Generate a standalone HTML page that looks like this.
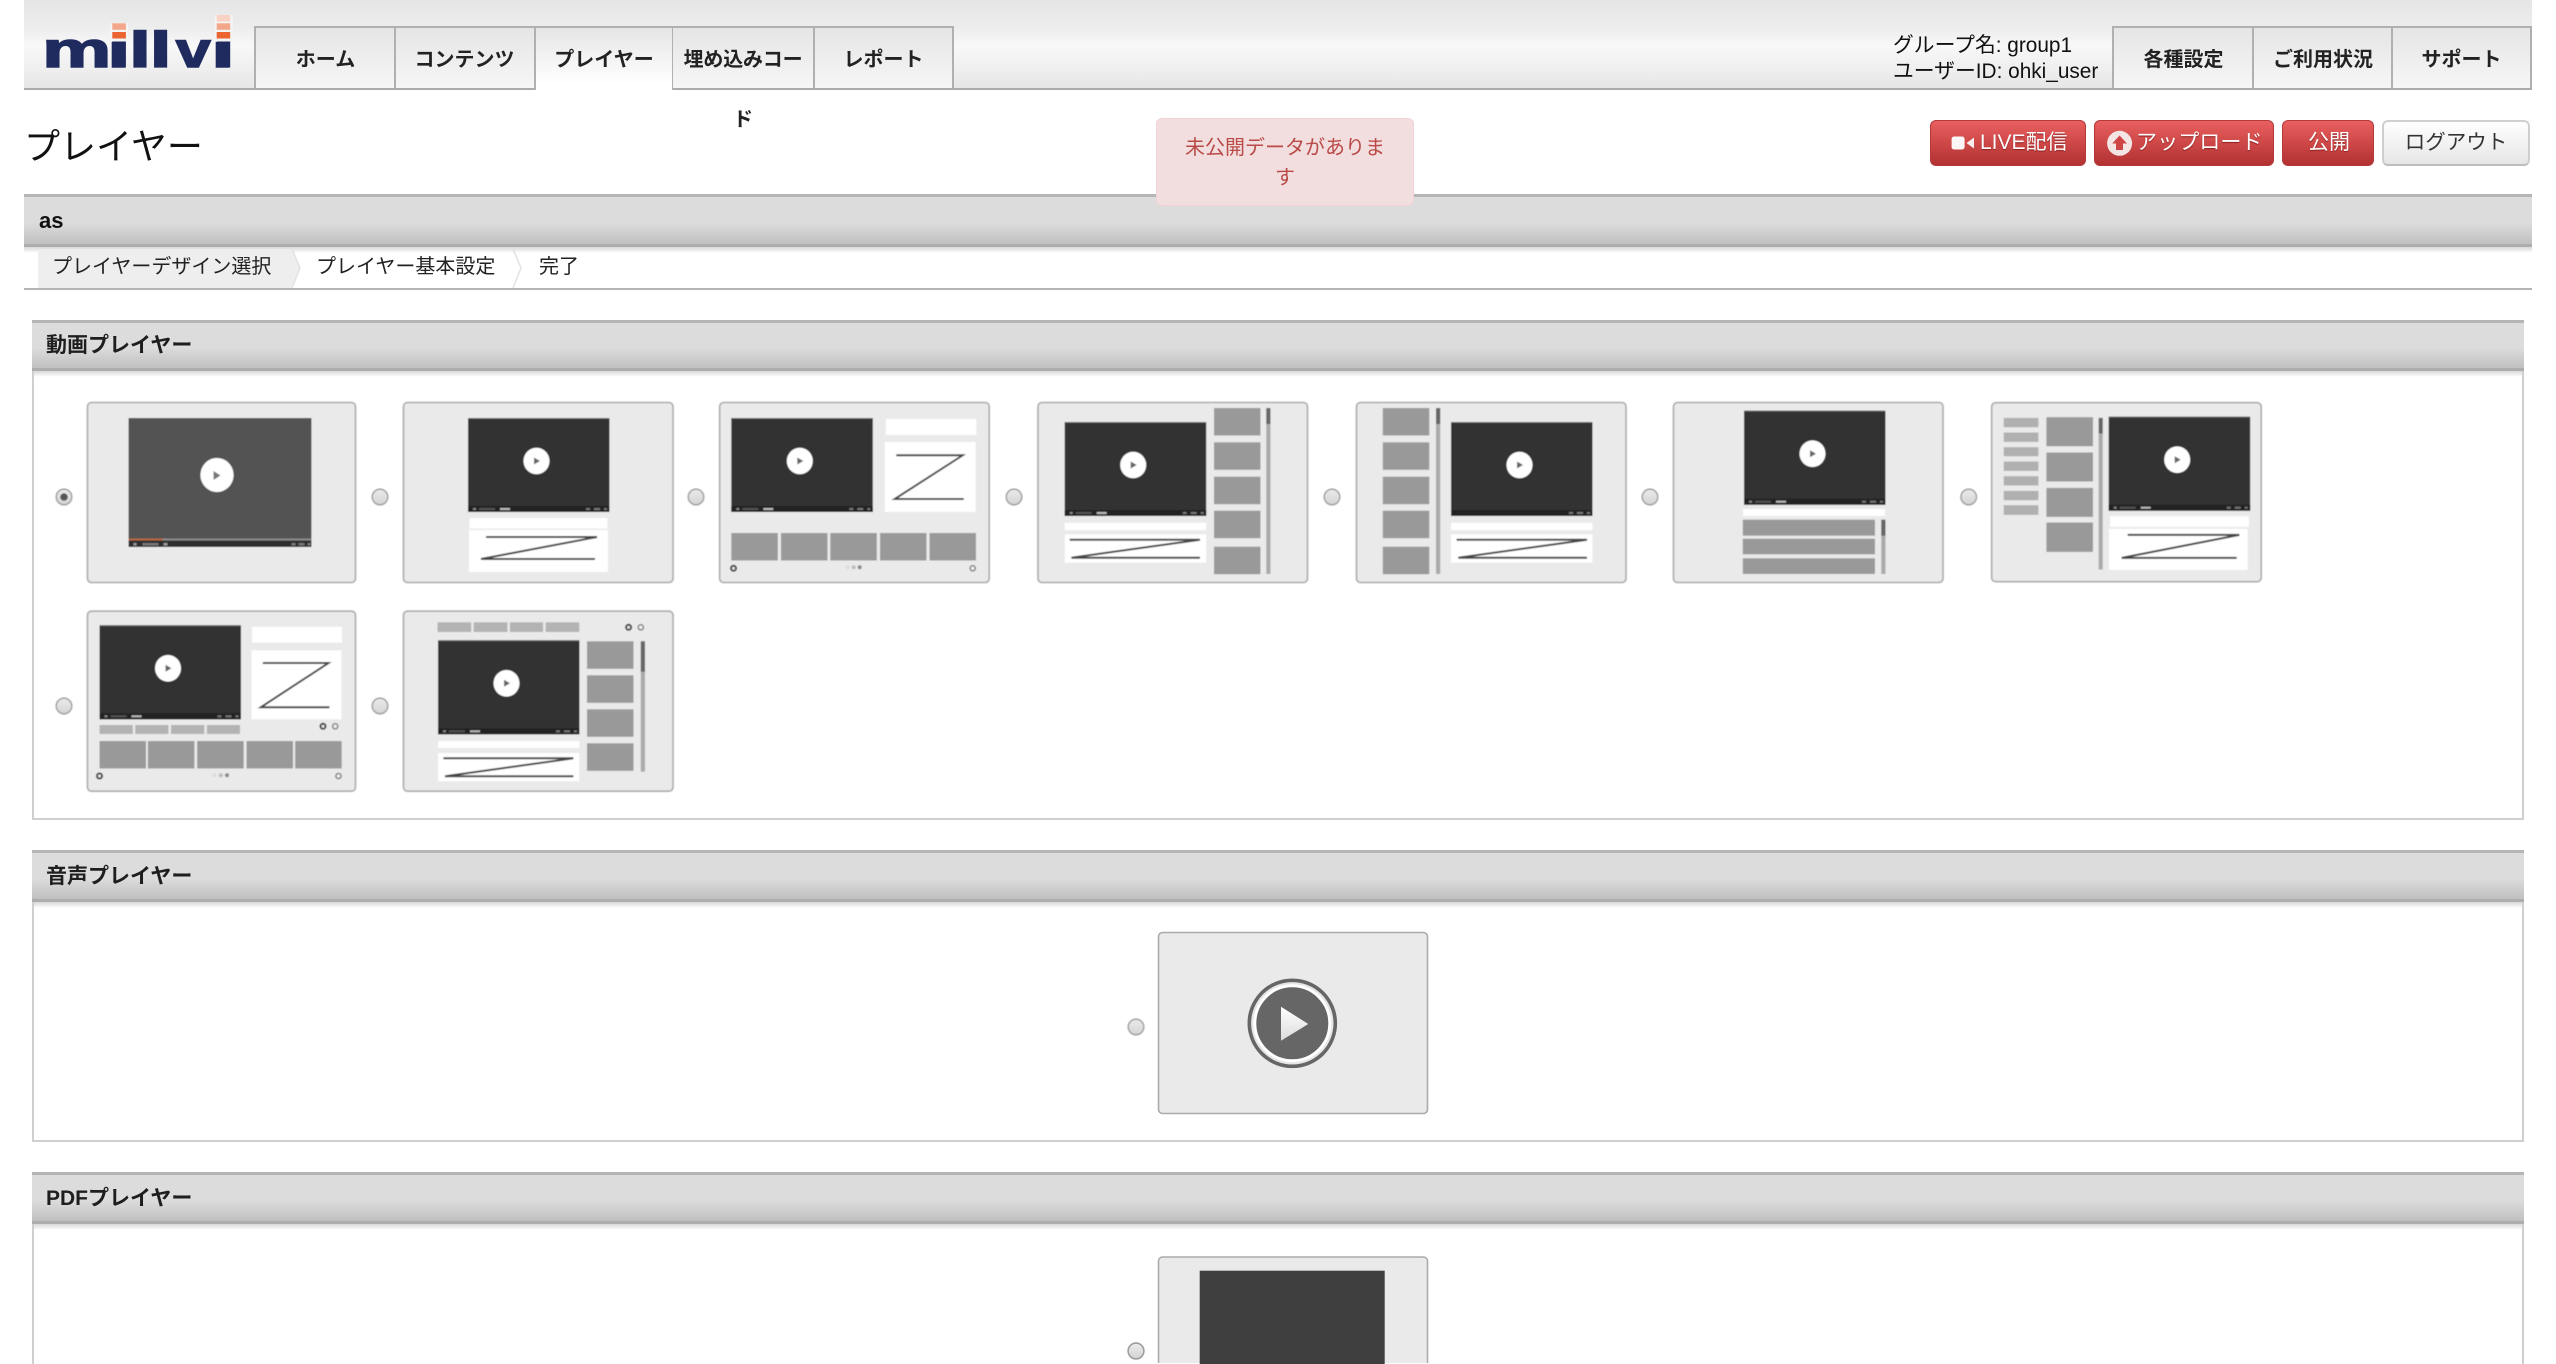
<!DOCTYPE html>
<html lang="ja"><head><meta charset="utf-8"><title>プレイヤー</title>
<style>
html,body{margin:0;padding:0;background:#fff;width:2556px;height:1364px;overflow:hidden}
body{position:relative;font-family:"Liberation Sans","Noto Sans CJK JP",sans-serif;color:#222}
.a{position:absolute;white-space:nowrap}
.hdr{left:24px;top:0;width:2508px;height:88px;background:linear-gradient(#e6e6e6 0,#ececec 30%,#f8f8f8 52%,#efefef 78%,#e6e6e6 100%);border-bottom:2px solid #ababab}
.tab{top:26px;height:62px;box-sizing:border-box;padding-top:2px;border:2px solid #b0b0b0;border-bottom:0;border-right:0;background:linear-gradient(#e5e5e5,#f6f6f6);font-weight:700;font-size:20px;line-height:60px;text-align:center;color:#222;overflow:visible}
.bar{box-sizing:border-box;background:linear-gradient(#dcdcdc 0,#dcdcdc 55%,#c0c0c0 100%);border-top:3px solid #b5b5b5;border-bottom:3px solid #adadad}
.sh{height:6px;background:linear-gradient(#d8d8d8,#fff)}
.sec{left:32px;width:2492px;box-sizing:border-box;border:2px solid #cfcfcf;border-top:0;background:#fff}
.t{font-weight:700;font-size:21px;line-height:30px;color:#1e1e1e}
.btn{top:120px;height:46px;box-sizing:border-box;border-radius:6px;background:linear-gradient(#ea5f5f,#b23131);border:1px solid #b23a3a;color:#fff;font-size:21px;line-height:44px;text-shadow:0 1px 1px #8a2020}
</style></head><body>

<div class="a hdr"></div>
<svg class="a" style="left:0;top:0" width="260" height="88" font-family="Liberation Sans" font-weight="700" font-size="50" fill="#1f2b5e" stroke="#1f2b5e" stroke-width="1.6">
<text transform="translate(42.3 67) scale(1.55 1)" x="0 42.1 56.1 69.4">mill</text>
<text transform="translate(175.9 67) scale(1.25 1)">v</text>
<text transform="translate(211.5 67) scale(1.55 1)">i</text>
<g stroke="none">
<rect x="110" y="23" width="18" height="19" fill="#f4f4f4"/><rect x="214.7" y="15" width="18" height="27" fill="#f4f4f4"/>
<rect x="112.3" y="32" width="13.6" height="6.5" fill="#ec6431"/><rect x="112.3" y="23.3" width="13.6" height="6.5" fill="#f4a68a"/>
<rect x="216.7" y="32" width="13.5" height="6.5" fill="#ec6431"/><rect x="216.7" y="23.3" width="13.5" height="6.5" fill="#f4a68a"/><rect x="216.7" y="15" width="13.5" height="6.5" fill="#fad2c4"/>
<rect x="112.3" y="41.5" width="13.6" height="26" fill="#1f2b5e"/><rect x="216.7" y="41.5" width="13.5" height="26" fill="#1f2b5e"/>
</g>
</svg>

<div class="a tab" style="left:254px;width:141px">ホーム</div>
<div class="a tab" style="left:394px;width:141px;text-indent:-2px">コンテンツ</div>
<div class="a tab" style="left:534px;width:140px;height:64px;background:linear-gradient(#e5e5e5,#fff 90%);border-right:2px solid #b0b0b0">プレイヤー</div>
<div class="a tab" style="left:673px;width:140px;white-space:normal;word-break:break-all;padding:2px 6px 0;height:62px;border-left:0;letter-spacing:-.2px">埋め込みコード</div>
<div class="a tab" style="left:813px;width:141px;border-right:2px solid #b0b0b0">レポート</div>

<div class="a" style="left:1893px;top:33px;font-size:20.8px;line-height:26px;color:#111">グループ名: group1<br>ユーザーID: ohki_user</div>
<div class="a tab" style="left:2112px;width:141px">各種設定</div>
<div class="a tab" style="left:2252px;width:140px">ご利用状況</div>
<div class="a tab" style="left:2391px;width:141px;border-right:2px solid #b0b0b0">サポート</div>

<div class="a" style="left:24px;top:121px;font-size:36px;line-height:52px;color:#111">プレイヤー</div>

<div class="a bar" style="left:24px;top:194px;width:2508px;height:53px"></div>
<div class="a sh" style="left:24px;top:247px;width:2508px"></div>
<div class="a" style="left:39px;top:206px;font-weight:700;font-size:22px;line-height:30px;color:#111">as</div>

<svg class="a" style="left:24px;top:247px" width="2508" height="44">
<polygon points="14,2 268,2 276,21 268,41 14,41" fill="#eeeeee"/>
<polyline points="268,2 276,21 268,41" fill="none" stroke="#e2e2e2" stroke-width="1.5"/>
<polyline points="489,2 497,21 489,41" fill="none" stroke="#e2e2e2" stroke-width="1.5"/>
<rect x="0" y="41" width="2508" height="2" fill="#b4b4b4"/>
</svg>
<div class="a" style="left:52px;top:252px;font-size:20px;line-height:30px;color:#222">プレイヤーデザイン選択</div>
<div class="a" style="left:316px;top:252px;font-size:20px;line-height:30px;color:#222">プレイヤー基本設定</div>
<div class="a" style="left:539px;top:252px;font-size:20px;line-height:30px;color:#222">完了</div>

<!-- sections -->
<div class="a sec" style="top:369px;height:451px"></div>
<div class="a bar" style="left:32px;top:320px;width:2492px;height:51px"></div>
<div class="a sh" style="left:34px;top:371px;width:2488px"></div>
<div class="a t" style="left:46px;top:331px">動画プレイヤー</div>

<div class="a sec" style="top:899px;height:243px"></div>
<div class="a bar" style="left:32px;top:850px;width:2492px;height:52px"></div>
<div class="a sh" style="left:34px;top:902px;width:2488px"></div>
<div class="a t" style="left:46px;top:862px">音声プレイヤー</div>

<div class="a sec" style="top:1222px;height:142px;border-bottom:0"></div>
<div class="a bar" style="left:32px;top:1172px;width:2492px;height:52px"></div>
<div class="a sh" style="left:34px;top:1224px;width:2488px"></div>
<div class="a t" style="left:46px;top:1184px">PDFプレイヤー</div>

<!-- notice -->
<div class="a" style="left:1156px;top:118px;width:258px;height:88px;box-sizing:border-box;background:#f2dede;border:1px solid #eed3d7;border-radius:6px;color:#b94a48;font-size:20px;line-height:30px;text-align:center;padding-top:14px">未公開データがありま<br>す</div>

<!-- buttons -->
<div class="a btn" style="left:1930px;width:156px"><span class="a" style="left:49px;top:0">LIVE配信</span></div>
<div class="a btn" style="left:2094px;width:180px"><span class="a" style="left:41px;top:0;letter-spacing:.1px">アップロード</span></div>
<div class="a btn" style="left:2282px;width:92px"><span class="a" style="left:25px;top:0">公開</span></div>
<div class="a" style="left:2382px;top:120px;width:148px;height:46px;box-sizing:border-box;border-radius:6px;border:2px solid #cfcfcf;border-bottom-color:#bdbdbd;background:linear-gradient(#fff,#e6e6e6);color:#333;font-size:20.5px;line-height:42px;text-align:center">ログアウト</div>
<svg class="a" style="left:1940px;top:125px" width="200" height="36">
<rect x="11.6" y="11.5" width="13" height="13" rx="2.5" fill="#fff" opacity=".95"/>
<polygon points="26.5,18 34,12.5 34,23.5" fill="#fff" opacity=".9"/>
<circle cx="179.6" cy="18.3" r="12.5" fill="#f4e4e4"/>
<polygon points="179.6,10.5 187,18.5 183,18.5 183,25 176,25 176,18.5 172.2,18.5" fill="#cf4545"/>
</svg>

<!-- thumbnails -->
<svg class="a" style="left:0;top:0;display:block" width="2556" height="1364">
<defs>
<filter id="b" x="-5%" y="-5%" width="110%" height="110%"><feGaussianBlur stdDeviation=".6"/></filter>
<linearGradient id="rg" x1="0" y1="0" x2="0" y2="1"><stop offset="0" stop-color="#ebebeb"/><stop offset="1" stop-color="#d4d4d4"/></linearGradient>
<linearGradient id="tg" x1="0" y1="0" x2="0" y2="1"><stop offset="0" stop-color="#fff"/><stop offset="1" stop-color="#dcdcdc"/></linearGradient>
<rect id="fr" x=".5" y=".5" width="269.5" height="180" rx="4" fill="#eaeaea" stroke="#ababab" stroke-width="1.6"/>
<rect id="fs" x="1" y=".5" width="268" height="180" rx="4" fill="#eaeaea" stroke="#ababab" stroke-width="1.6"/>
<g id="v">
<rect width="141.5" height="94" fill="#333"/><rect width="141.5" height="1" fill="#666"/>
<rect y="88" width="141.5" height="6" fill="#232323"/>
<rect x="5" y="90" width="3" height="2" fill="#888"/><rect x="11" y="90" width="16" height="2" fill="#555"/><rect x="32" y="90" width="10" height="2" fill="#bbb"/>
<rect x="118" y="90" width="4" height="2" fill="#777"/><rect x="126" y="90" width="6" height="2" fill="#777"/><rect x="136" y="90" width="3" height="2" fill="#777"/>
<ellipse cx="68.5" cy="43" rx="13" ry="13.3" fill="#fff"/><polygon points="66,39.5 66,46.5 72,43" fill="#666"/>
</g>
<g id="vn">
<rect width="141.5" height="94" fill="#333"/><rect width="141.5" height="1" fill="#666"/>
<rect y="88" width="141.5" height="6" fill="#232323"/>
<rect x="118" y="90" width="4" height="2" fill="#777"/><rect x="126" y="90" width="6" height="2" fill="#777"/><rect x="136" y="90" width="3" height="2" fill="#777"/>
<ellipse cx="68.5" cy="43" rx="13" ry="13.3" fill="#fff"/><polygon points="66,39.5 66,46.5 72,43" fill="#666"/>
</g>
<circle id="r" r="7.8" fill="url(#rg)" stroke="#999" stroke-width="1.3"/>
<rect id="s" width="46.5" height="27.5" fill="#999"/>
</defs>

<g filter="url(#b)">
<!-- radios -->
<use href="#r" x="64" y="497"/><circle cx="64" cy="497" r="3.8" fill="#555"/>
<use href="#r" x="380" y="497"/><use href="#r" x="696" y="497"/><use href="#r" x="1014" y="497"/><use href="#r" x="1332" y="497"/><use href="#r" x="1650" y="497"/><use href="#r" x="1968.7" y="497"/>
<use href="#r" x="64" y="706"/><use href="#r" x="380" y="706"/>
<use href="#r" x="1136" y="1027"/><use href="#r" x="1136" y="1351"/>

<!-- 1 -->
<g transform="translate(86.5 402)"><use href="#fs"/>
<rect x="42" y="16" width="183" height="129" fill="#525252"/>
<rect x="42" y="136.5" width="183" height="2" fill="#8a8a8a"/><rect x="42" y="136.5" width="34" height="2" fill="#b5673f"/>
<rect x="42" y="138.5" width="183" height="6.5" fill="#2e2e2e"/>
<rect x="47" y="141" width="3" height="2.5" fill="#999"/><rect x="56" y="141" width="16" height="2.5" fill="#777"/><rect x="77" y="141" width="4" height="2.5" fill="#999"/><rect x="205" y="141" width="4" height="2.5" fill="#777"/><rect x="212" y="141" width="6" height="2.5" fill="#777"/><rect x="221" y="141" width="3" height="2.5" fill="#777"/>
<ellipse cx="130.5" cy="73" rx="16.6" ry="17" fill="#fff"/><polygon points="127,69 127,78 134,73.5" fill="#777"/>
</g>
<!-- 2 -->
<g transform="translate(403 402)"><use href="#fr"/>
<use href="#v" x="65" y="16"/>
<rect x="66.5" y="116" width="138" height="10.5" fill="#fff"/>
<rect x="66" y="128" width="139" height="42" fill="#fff"/>
<polyline points="83,135 194,135 78,157 192,157" fill="none" stroke="#444" stroke-width="2"/>
</g>
<!-- 3 -->
<g transform="translate(718.7 402)"><use href="#fr" x=".5"/>
<use href="#v" x="12.6" y="16"/>
<rect x="167" y="17" width="90.6" height="16" fill="#fff"/>
<rect x="166" y="40" width="91" height="70" fill="#fff"/>
<polyline points="177.6,53.3 244,53.3 176,97 245,97" fill="none" stroke="#444" stroke-width="2"/>
<use href="#s" x="12.6" y="131"/><use href="#s" x="62.3" y="131"/><use href="#s" x="111.6" y="131"/><use href="#s" x="161.3" y="131"/><use href="#s" x="210.8" y="131"/>
<circle cx="14.8" cy="166.3" r="2.6" fill="#ddd" stroke="#333" stroke-width="1.8"/><circle cx="254" cy="166.3" r="2.6" fill="#eee" stroke="#777" stroke-width="1.4"/>
<circle cx="129" cy="165.3" r="2" fill="#ddd"/><circle cx="135" cy="165.3" r="2" fill="#bbb"/><circle cx="141" cy="165.3" r="2" fill="#888"/>
</g>
<!-- 4 -->
<g transform="translate(1037 402)"><use href="#fr" x=".5"/>
<use href="#v" x="27.7" y="20"/>
<rect x="27.7" y="120.7" width="141.5" height="7.5" fill="#fff"/>
<rect x="27.7" y="132.3" width="141.5" height="28.4" fill="#fff"/>
<polyline points="32.7,137.7 163,137.7 34.4,155.7 163,155.7" fill="none" stroke="#444" stroke-width="2"/>
<use href="#s" x="177" y="6"/><use href="#s" x="177" y="40.3"/><use href="#s" x="177" y="74.7"/><use href="#s" x="177" y="108.7"/><use href="#s" x="177" y="144.7"/>
<rect x="229.3" y="6" width="4.2" height="166" fill="#aaa"/><rect x="229.3" y="6" width="4.2" height="16" fill="#666"/>
</g>
<!-- 5 -->
<g transform="translate(1356 402)"><use href="#fr"/>
<use href="#s" x="26.8" y="6"/><use href="#s" x="26.8" y="40.3"/><use href="#s" x="26.8" y="74.7"/><use href="#s" x="26.8" y="108.7"/><use href="#s" x="26.8" y="144.7"/>
<rect x="80" y="6" width="4.2" height="166" fill="#aaa"/><rect x="80" y="6" width="4.2" height="16" fill="#666"/>
<use href="#vn" x="95" y="20"/>
<rect x="95" y="120.7" width="141.5" height="7.5" fill="#fff"/>
<rect x="95" y="132.3" width="141.5" height="28.4" fill="#fff"/>
<polyline points="100.6,137.7 231,137.7 102.3,155.7 231,155.7" fill="none" stroke="#444" stroke-width="2"/>
</g>
<!-- 6 -->
<g transform="translate(1673 402)"><use href="#fr"/>
<use href="#v" x="71" y="8.7"/>
<rect x="70" y="107" width="142" height="7" fill="#fff"/>
<rect x="69.8" y="117.7" width="132.2" height="16" fill="#999"/><rect x="69.8" y="136.7" width="132.2" height="15.6" fill="#999"/><rect x="69.8" y="156.3" width="132.2" height="15.7" fill="#999"/>
<rect x="208.3" y="117.7" width="4.2" height="54.3" fill="#aaa"/><rect x="208.3" y="117.7" width="4.2" height="16" fill="#666"/>
</g>
<!-- 7 -->
<g transform="translate(1990.7 402.2)"><rect x="1" y=".5" width="269.5" height="179" rx="4" fill="#eaeaea" stroke="#ababab" stroke-width="1.6"/>
<rect x="13" y="15.7" width="34.7" height="9.3" fill="#b0b0b0"/><rect x="13" y="30.3" width="34.7" height="9.4" fill="#b0b0b0"/><rect x="13" y="45" width="34.7" height="9" fill="#b0b0b0"/><rect x="13" y="59.3" width="34.7" height="9.4" fill="#b0b0b0"/><rect x="13" y="74" width="34.7" height="9.3" fill="#b0b0b0"/><rect x="13" y="88.7" width="34.7" height="9.3" fill="#b0b0b0"/><rect x="13" y="103" width="34.7" height="9.7" fill="#b0b0b0"/>
<rect x="55.7" y="15" width="46.6" height="29" fill="#999"/><rect x="55.7" y="50.3" width="46.6" height="29" fill="#999"/><rect x="55.7" y="85.7" width="46.6" height="29" fill="#999"/><rect x="55.7" y="120.3" width="46.6" height="29.4" fill="#999"/>
<rect x="108" y="15.7" width="4" height="151.6" fill="#aaa"/><rect x="108" y="15.7" width="4" height="15.6" fill="#666"/>
<use href="#v" x="118" y="14.5"/>
<rect x="119.3" y="114" width="139" height="10.7" fill="#fff"/>
<rect x="118.3" y="126.7" width="138.7" height="41" fill="#fff"/>
<polyline points="137,132.7 248.7,132.7 131,155.7 246,155.7" fill="none" stroke="#444" stroke-width="2"/>
</g>
<!-- 8 -->
<g transform="translate(86.5 610.7)"><use href="#fs"/>
<use href="#v" x="13" y="14.6"/>
<rect x="165.5" y="16" width="90" height="16" fill="#fff"/>
<rect x="165" y="39.6" width="90" height="69" fill="#fff"/>
<polyline points="176.3,52.3 242,52.3 174.3,96.6 243,96.6" fill="none" stroke="#444" stroke-width="2"/>
<rect x="13" y="114.3" width="33.3" height="9" fill="#b3b3b3"/><rect x="48.8" y="114.3" width="33.2" height="9" fill="#b3b3b3"/><rect x="84.5" y="114.3" width="33.3" height="9" fill="#b3b3b3"/><rect x="120.4" y="114.3" width="33.1" height="9" fill="#b3b3b3"/>
<circle cx="236.5" cy="115.6" r="2.6" fill="#ddd" stroke="#333" stroke-width="1.8"/><circle cx="248.7" cy="115.6" r="2.6" fill="#eee" stroke="#777" stroke-width="1.4"/>
<use href="#s" x="13" y="130.3"/><use href="#s" x="61.4" y="130.3"/><use href="#s" x="110.7" y="130.3"/><use href="#s" x="160" y="130.3"/><use href="#s" x="208.7" y="130.3"/>
<circle cx="13" cy="165.3" r="2.6" fill="#ddd" stroke="#333" stroke-width="1.8"/><circle cx="252" cy="165.3" r="2.6" fill="#eee" stroke="#777" stroke-width="1.4"/>
<circle cx="127.9" cy="164.6" r="2" fill="#ddd"/><circle cx="134.3" cy="164.6" r="2" fill="#bbb"/><circle cx="140.5" cy="164.6" r="2" fill="#888"/>
</g>
<!-- 9 -->
<g transform="translate(403 610.7)"><use href="#fr"/>
<rect x="34.5" y="11.6" width="33.7" height="9.7" fill="#b3b3b3"/><rect x="70.7" y="11.6" width="33.7" height="9.7" fill="#b3b3b3"/><rect x="106.9" y="11.6" width="33.2" height="9.7" fill="#b3b3b3"/><rect x="142.7" y="11.6" width="33.6" height="9.7" fill="#b3b3b3"/>
<circle cx="225.6" cy="16.6" r="2.6" fill="#ddd" stroke="#333" stroke-width="1.8"/><circle cx="237.8" cy="16.6" r="2.6" fill="#eee" stroke="#777" stroke-width="1.4"/>
<use href="#v" x="35" y="29.6"/>
<rect x="35" y="130.3" width="141.3" height="7" fill="#fff"/>
<rect x="35" y="142.3" width="141.3" height="28.3" fill="#fff"/>
<polyline points="40.4,147.6 170.4,147.6 42,165.6 170.4,165.6" fill="none" stroke="#444" stroke-width="2"/>
<use href="#s" x="184" y="30.6"/><use href="#s" x="184" y="64.6"/><use href="#s" x="184" y="98.6"/><use href="#s" x="184" y="132.6"/>
<rect x="237.8" y="30.6" width="4.2" height="130.4" fill="#aaa"/><rect x="237.8" y="30.6" width="4.2" height="30.4" fill="#666"/>
</g>
</g>

<!-- audio -->
<rect x="1158.5" y="932.5" width="269" height="181" rx="4" fill="#eaeaea" stroke="#ababab" stroke-width="1.6"/>
<circle cx="1292.3" cy="1023.3" r="43" fill="#e6e6e6" stroke="#666" stroke-width="3.6"/>
<circle cx="1292.3" cy="1023.3" r="37.5" fill="#666" stroke="#fff" stroke-width="3"/>
<polygon points="1281,1006.7 1281,1040.7 1308.3,1024" fill="url(#tg)"/>

<!-- pdf: open-bottomed frame ending exactly at the page edge -->
<path d="M1158.5 1363V1261a4 4 0 0 1 4-4H1423.5a4 4 0 0 1 4 4V1363" fill="#eaeaea" stroke="#ababab" stroke-width="1.6"/>
<rect x="1199.7" y="1270.7" width="185" height="93.3" fill="#3f3f3f"/>
<use href="#r" x="1136" y="1351"/>
</svg>

</body></html>
